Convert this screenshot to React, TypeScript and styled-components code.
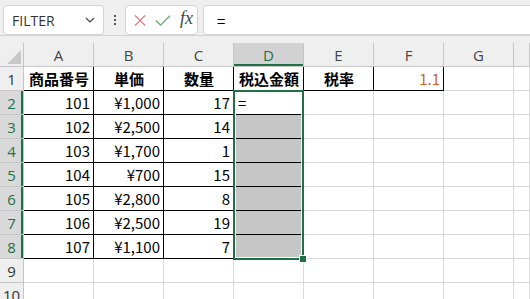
import React from 'react'
import styled, { createGlobalStyle } from 'styled-components'

const GREEN = '#1e7145'
const GRID = '#d9d9d9'
const HEAD_LINE = '#c6c6c6'

const GlobalStyle = createGlobalStyle`
  html, body {
    margin: 0;
    padding: 0;
    background: #ffffff;
    overflow: hidden;
  }
`

const columns = ['A', 'B', 'C', 'D', 'E', 'F', 'G', '']

type CellData = { text?: string; align?: 'left' | 'center' | 'right'; bold?: boolean; color?: string }

const items: [string, string, string][] = [
  ['101', '¥1,000', '17'],
  ['102', '¥2,500', '14'],
  ['103', '¥1,700', '1'],
  ['104', '¥700', '15'],
  ['105', '¥2,800', '8'],
  ['106', '¥2,500', '19'],
  ['107', '¥1,100', '7'],
]

const headerRow: CellData[] = [
  { text: '商品番号', align: 'center', bold: true },
  { text: '単価', align: 'center', bold: true },
  { text: '数量', align: 'center', bold: true },
  { text: '税込金額', align: 'center', bold: true },
  { text: '税率', align: 'center', bold: true },
  { text: '1.1', align: 'right', color: '#d2642a' },
]

const rows: CellData[][] = [
  headerRow,
  ...items.map((it, i) => [
    { text: it[0], align: 'right' as const },
    { text: it[1], align: 'right' as const },
    { text: it[2], align: 'right' as const },
    { text: i === 0 ? '=' : '', align: 'left' as const },
  ]),
  [],
  [],
]

// which cells carry the thin black table border (right + bottom)
const isBoxed = (r: number, c: number) => (r === 0 && c <= 5) || (r >= 1 && r <= 7 && c <= 3)

const App: React.FC = () => {
  return (
    <Frame>
      <GlobalStyle />
      <Toolbar>
        <NameBox>
          <NameText>FILTER</NameText>
          <svg width='10' height='6' viewBox='0 0 10 6'>
            <path d='M1 1 L5 5 L9 1' fill='none' stroke='#444' strokeWidth='1.2' />
          </svg>
        </NameBox>
        <Dots>
          <Dot />
          <Dot />
          <Dot />
        </Dots>
        <FxBox>
          <svg width='13' height='13' viewBox='0 0 13 13'>
            <path d='M1 1 L12 12 M12 1 L1 12' stroke='#e57373' strokeWidth='1.4' />
          </svg>
          <svg width='17' height='13' viewBox='0 0 17 13'>
            <path d='M1 6.5 L6 11.5 L16 1.5' fill='none' stroke='#5fae6e' strokeWidth='1.4' />
          </svg>
          <FxText>fx</FxText>
        </FxBox>
        <FormulaBar>=</FormulaBar>
      </Toolbar>
      <Band />
      <Sheet>
        <Row>
          <Corner>
            <svg width='14' height='14' viewBox='0 0 14 14'>
              <path d='M14 0 L14 14 L0 14 Z' fill='#c8c8c8' />
            </svg>
          </Corner>
          {columns.map((c, i) => (
            <ColHead key={i} $active={c === 'D'} $last={i === columns.length - 1}>{c}</ColHead>
          ))}
        </Row>
        {rows.map((cells, r) => (
          <Row key={r}>
            <RowHead $active={r >= 1 && r <= 7}>{r + 1}</RowHead>
            {columns.map((_, c) => {
              const cell = cells[c] || {}
              return (
                <Cell
                  key={c}
                  $boxed={isBoxed(r, c)}
                  $align={cell.align || 'left'}
                  $bold={!!cell.bold}
                  $color={cell.color || '#000'}
                  $fill={c === 3 && r >= 2 && r <= 7}
                  $last={c === columns.length - 1}
                >
                  {cell.text}
                </Cell>
              )
            })}
          </Row>
        ))}
        <Selection>
          <FillHandle />
        </Selection>
      </Sheet>
    </Frame>
  )
}

export default App

export const Frame = styled.div`
  width: 530px;
  height: 299px;
  overflow: hidden;
  display: flex;
  flex-direction: column;
  background: #ffffff;
`
export const Toolbar = styled.div`
  flex: none;
  height: 30px;
  padding: 5px 0 0 3px;
  background: #efefef;
  border-bottom: 1px solid #d2d2d2;
  display: flex;
  align-items: stretch;
`
export const Box = styled.div`
  box-sizing: border-box;
  height: 30px;
  background: #ffffff;
  border: 1px solid #d3d3d3;
  border-radius: 4px;
  display: flex;
  align-items: center;
`
export const NameBox = styled(Box)`
  width: 101px;
  padding: 0 8px 0 8px;
  justify-content: space-between;
`
export const NameText = styled.span`
  font-family: "Open Sans", "Noto Sans", sans-serif;
  font-size: 14px;
  color: #333;
`
export const Dots = styled.div`
  width: 21px;
  display: flex;
  flex-direction: column;
  align-items: center;
  justify-content: center;
  gap: 2px;
`
export const Dot = styled.span`
  width: 2px;
  height: 2px;
  background: #555;
`
export const FxBox = styled(Box)`
  width: 73px;
  padding: 0 4px 0 8px;
  gap: 9px;
`
export const FxText = styled.span`
  font-family: "Liberation Serif", "DejaVu Serif", serif;
  font-style: italic;
  font-size: 18px;
  color: #444;
  margin-top: -3px;
`
export const FormulaBar = styled(Box)`
  flex: 1;
  margin-left: 5px;
  padding-left: 13px;
  border-right: none;
  border-radius: 4px 0 0 4px;
  font-family: "Noto Sans CJK JP", sans-serif;
  font-size: 15px;
  color: #000;
`
export const Band = styled.div`
  flex: none;
  height: 7px;
  background: #efefef;
`
export const Sheet = styled.div`
  position: relative;
  flex: 1;
  min-height: 0;
  display: flex;
  flex-direction: column;
`
export const Row = styled.div`
  display: flex;
  height: 24px;
  flex: none;
`
export const HeadBase = styled.div`
  box-sizing: border-box;
  height: 24px;
  display: flex;
  align-items: center;
  justify-content: center;
  font-family: "Open Sans", "Noto Sans", sans-serif;
  font-size: 15px;
  color: #444;
  background: #efefef;
  border-right: 1px solid ${HEAD_LINE};
  border-bottom: 1px solid ${HEAD_LINE};
`
export const Corner = styled(HeadBase)`
  width: 24px;
  align-items: flex-end;
  justify-content: flex-end;
  padding: 0 2px 2px 0;
`
export const ColHead = styled(HeadBase)<{ $active: boolean; $last: boolean }>`
  width: ${p => (p.$last ? 'auto' : '70px')};
  flex: ${p => (p.$last ? 1 : 'none')};
  background: ${p => (p.$active ? '#d2d2d2' : '#efefef')};
  color: ${p => (p.$active ? GREEN : '#444')};
  box-shadow: ${p => (p.$active ? `inset 0 -2px 0 ${GREEN}` : 'none')};
`
export const RowHead = styled(HeadBase)<{ $active: boolean }>`
  width: 24px;
  background: ${p => (p.$active ? '#d9d9d9' : '#efefef')};
  color: ${p => (p.$active ? GREEN : '#333')};
  box-shadow: ${p => (p.$active ? `inset -2px 0 0 ${GREEN}` : 'none')};
`
export const Cell = styled.div<{
  $boxed: boolean
  $align: string
  $bold: boolean
  $color: string
  $fill: boolean
  $last: boolean
}>`
  box-sizing: border-box;
  width: ${p => (p.$last ? 'auto' : '70px')};
  flex: ${p => (p.$last ? 1 : 'none')};
  height: 24px;
  padding: 0 3px 0 4px;
  display: flex;
  align-items: center;
  justify-content: ${p => (p.$align === 'right' ? 'flex-end' : p.$align === 'center' ? 'center' : 'flex-start')};
  font-family: "Noto Sans CJK JP", "Noto Sans", sans-serif;
  font-size: 15px;
  font-weight: ${p => (p.$bold ? 700 : 400)};
  color: ${p => p.$color};
  background: ${p => (p.$fill ? '#c6c6c6' : '#ffffff')};
  border-right: 1px solid ${p => (p.$boxed ? '#000' : GRID)};
  border-bottom: 1px solid ${p => (p.$boxed ? '#000' : GRID)};
  white-space: nowrap;
`
export const Selection = styled.div`
  position: absolute;
  left: 233px;
  top: 47px;
  width: 71px;
  height: 170px;
  box-sizing: border-box;
  border: 2px solid ${GREEN};
  box-shadow: inset 0 0 0 1px #ffffff;
  pointer-events: none;
`
export const FillHandle = styled.div`
  position: absolute;
  right: -5px;
  bottom: -5px;
  width: 6px;
  height: 6px;
  background: ${GREEN};
  border: 1px solid #ffffff;
`
